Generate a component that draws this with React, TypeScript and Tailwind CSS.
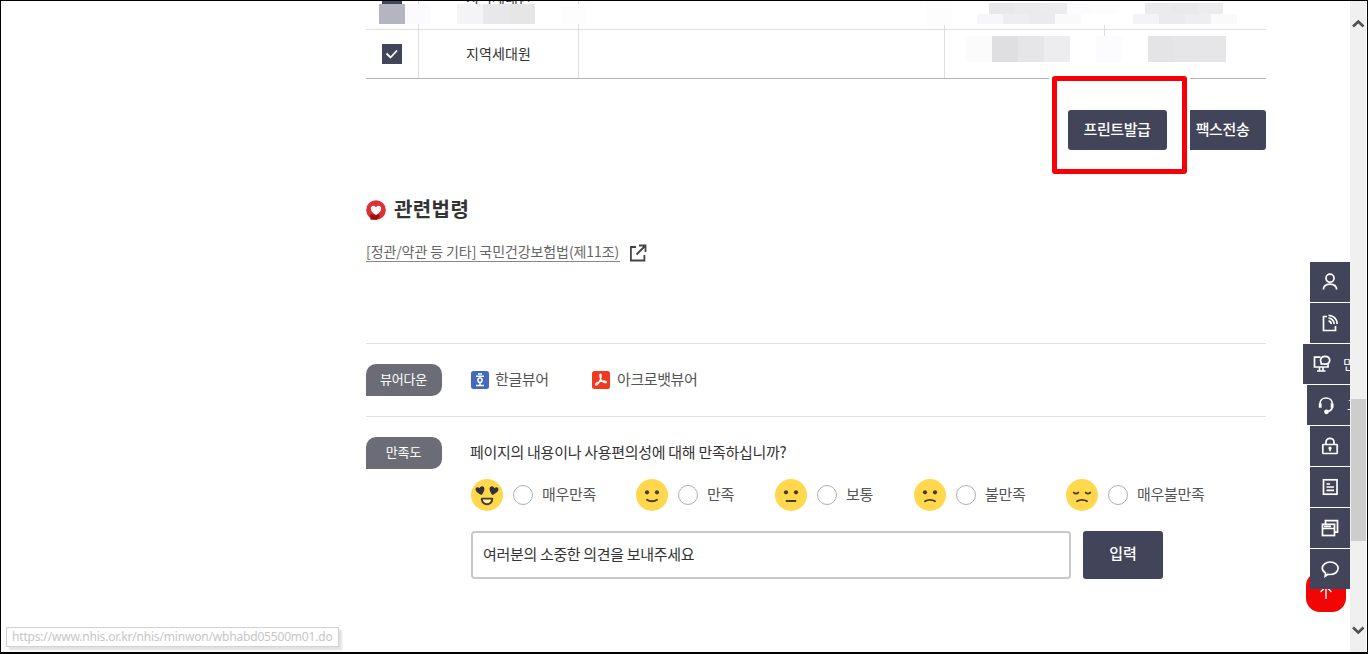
import React, { useState } from 'react';

const FONT = "font-['Noto_Sans_CJK_KR','Noto_Sans',sans-serif]";

type Mood = 'love' | 'good' | 'normal' | 'bad' | 'awful';

const RATINGS: { mood: Mood; label: string; width: string }[] = [
  { mood: 'love', label: '매우만족', width: 'w-[165px]' },
  { mood: 'good', label: '만족', width: 'w-[139px]' },
  { mood: 'normal', label: '보통', width: 'w-[139px]' },
  { mood: 'bad', label: '불만족', width: 'w-[152px]' },
  { mood: 'awful', label: '매우불만족', width: 'w-[150px]' },
];

const Face: React.FC<{ mood: Mood }> = ({ mood }) => (
  <svg className="h-8 w-8 shrink-0" viewBox="0 0 32 32" fill="none" stroke="#4a3a22" strokeWidth={1.9} strokeLinecap="round">
    <circle cx="16" cy="16" r="16" fill="#ffd84d" stroke="none" />
    {mood === 'love' && (
      <>
        <g fill="#33303a" stroke="none">
          <path d="M10.8 16C7 14.6 4.2 12.2 4.6 9.8c.3-1.8 2.7-2.3 4-.6.5-2.1 3-2.6 4.2-1.2 1.6 2-.1 5-2 8z" />
          <path d="M21.2 16c3.8-1.4 6.6-3.8 6.2-6.2-.3-1.8-2.7-2.3-4-.6-.5-2.1-3-2.6-4.2-1.2-1.6 2 .1 5 2 8z" />
        </g>
        <path d="M10.8 19.6h10.4v.6a5.2 5 0 0 1-10.4 0z" stroke="#4a3a22" fill="#fff0b0" strokeLinejoin="round" />
      </>
    )}
    {(mood === 'good' || mood === 'normal' || mood === 'bad') && (
      <g fill="#4a3a22" stroke="none">
        <circle cx="11" cy="13.3" r="2.1" />
        <circle cx="21" cy="13.3" r="2.1" />
      </g>
    )}
    {mood === 'good' && <path d="M11 20.8c2.5 1.9 7.5 1.9 10 0" />}
    {mood === 'normal' && <path d="M11.5 22h9" />}
    {mood === 'bad' && <path d="M11 22.3c2.5-1.9 7.5-1.9 10 0" />}
    {mood === 'awful' && (
      <>
        <path d="M7.8 13.6c1.2 1.3 3.2 1.3 4.5 0M19.7 13.6c1.3 1.3 3.3 1.3 4.5 0" />
        <path d="M11 22.3c2.5-1.9 7.5-1.9 10 0" />
      </>
    )}
  </svg>
);

const QUICK_ICONS: { name: string; width: string; pad: string; extra?: string; icon: React.ReactNode }[] = [
  {
    name: 'user',
    width: 'w-10',
    pad: 'pl-[10px]',
    icon: (
      <>
        <circle cx="10" cy="6.2" r="4" />
        <path d="M3.3 17.5c.4-3.8 2.9-5.3 6.700-5.300s6.300 1.500 6.700 5.300" />
      </>
    ),
  },
  {
    name: 'mobile',
    width: 'w-10',
    pad: 'pl-[10px]',
    icon: (
      <>
        <path d="M7 3.500H3.500v14h12V13" />
        <path d="M8.500 2.300c4.500 0 8.700 3.500 8.700 8.700M8.500 5.200c3 0 5.700 2.400 5.700 5.800M8.500 8.200c1.500 0 2.700 1.200 2.700 2.800" />
      </>
    ),
  },
  {
    name: 'minwon',
    width: 'w-[47px]',
    pad: 'pl-[9px]',
    extra: '민원',
    icon: (
      <>
        <path d="M8.500 3.200H2.500v9.800h13.500v-3M7.500 13v3.500M11 13v3.500M5 17h8.500" />
        <path d="M9.300 10l-.3-2C7.400 5.500 9.500 2.300 12.700 2.300c3 0 5 1.700 5 3.900s-2 3.900-5 3.900c-1.200 0-2.400-.4-3.400-.1z" />
      </>
    ),
  },
  {
    name: 'support',
    width: 'w-[43px]',
    pad: 'pl-[9px]',
    extra: '고객',
    icon: (
      <>
        <path d="M4 12V8.800C4 5.300 6.500 3 10 3s6.300 2.300 6.300 5.800v2.400c0 3-2 4.800-5.300 5.300" />
        <path d="M4.200 8.500v4.300M16.100 8.500v4.300" strokeWidth={2.800} />
        <circle cx="10.500" cy="16.800" r="1.500" fill="white" />
      </>
    ),
  },
  {
    name: 'lock',
    width: 'w-10',
    pad: 'pl-[10px]',
    icon: (
      <>
        <rect x="2.800" y="8.500" width="14.400" height="9" rx="0.500" />
        <path d="M6 8.500V6c0-2 1.700-3.700 4-3.700S14 4 14 6v2.500M10 13v2.300" />
        <circle cx="10" cy="12.200" r="0.800" fill="white" />
      </>
    ),
  },
  {
    name: 'document',
    width: 'w-10',
    pad: 'pl-[10px]',
    icon: (
      <>
        <rect x="3.500" y="2.800" width="13.500" height="14.400" />
        <path d="M6.500 7h3.500M6.500 10h7.500M6.500 13.300h7.500" />
      </>
    ),
  },
  {
    name: 'windows',
    width: 'w-10',
    pad: 'pl-[10px]',
    icon: (
      <>
        <rect x="2.500" y="6.300" width="12" height="11.200" />
        <path d="M2.500 10.500h12M5.500 6V2.700h12v11.500h-3M4 8.400h7" />
      </>
    ),
  },
  {
    name: 'chat',
    width: 'w-10',
    pad: 'pl-[10px]',
    icon: <path d="M5.200 17.200l.3-3.200C3.300 12.600 2.300 11 2.300 9.300c0-3.500 3.400-6.300 7.900-6.300s7.900 2.800 7.900 6.300-3.400 6.200-7.900 6.200c-.8 0-1.600-.1-2.300-.3z" />,
  },
];

const CheckBox: React.FC = () => (
  <span className="flex h-5 w-5 items-center justify-center bg-[#42455a]">
    <svg className="h-5 w-5" viewBox="0 0 20 20" fill="none" stroke="white" strokeWidth={1.800}>
      <path d="M4.500 9.500l4 4 6.500-7" />
    </svg>
  </span>
);

// Blurred blocks that hide personal data in the table
const Mosaic: React.FC<{ place: string; colors: string[] }> = ({ place, colors }) => (
  <div className={`absolute flex ${place}`}>
    {colors.map((color, i) => (
      <span key={i} className={`h-full w-[26px] ${color}`} />
    ))}
  </div>
);

const MemberTable: React.FC = () => (
  <div className="relative h-[78px] overflow-hidden border-b border-[#b4b4b4] text-sm text-[#333]">
    {/* Upper row, scrolled almost out of view */}
    <div className="grid h-[29px] grid-cols-[52px_161px_366px_160px_161px] overflow-hidden border-b border-[#dedede]">
      <div className="flex items-start justify-center"><span className="-mt-[17px]"><CheckBox /></span></div>
      <div className="flex h-[29px] items-start justify-center border-r border-l border-[#dedede] leading-5">
        <span className="-mt-[14px] tracking-[0.1px]">지역세대원</span>
      </div>
      <div className="border-r border-[#dedede]" />
      <div className="border-r border-[#dedede]" />
    </div>
    <div className="grid h-12 grid-cols-[52px_161px_366px_160px_161px]">
      <div className="flex items-center justify-center"><CheckBox /></div>
      <div className="flex items-center justify-center border-r border-l border-[#dedede] pb-[3px] tracking-[0.1px]">지역세대원</div>
      <div className="border-r border-[#dedede]" />
      <div className="flex justify-end"><span className="h-1.5 w-px bg-[#dedede]" /></div>
    </div>
    <Mosaic place="left-[13px] top-[3px] h-5" colors={['bg-[#b5b5c1]', 'bg-[#fbfbfd]', 'bg-white']} />
    <Mosaic place="left-[91px] top-[3px] h-5" colors={['bg-[#f4f4f6]', 'bg-[#e8e8ea]', 'bg-[#e6e6e7]', 'bg-white', 'bg-[#fdfdfe]']} />
    <Mosaic place="left-[560px] top-0 h-6" colors={['bg-[#fdfdfe]', 'bg-white', 'bg-white', 'bg-white', 'bg-white', 'bg-white', 'bg-white', 'bg-white', 'bg-white', 'bg-white', 'bg-white', 'bg-white', 'bg-white']} />
    <Mosaic place="left-[623px] top-0.5 h-[11px]" colors={['bg-[#e8e8eb]', 'bg-[#ebebed]', 'bg-[#ececee]', 'bg-[#fcfcfe]', 'bg-[#fdfdfe]', 'bg-white', 'bg-[#ebebed]', 'bg-[#e9e9eb]', 'bg-[#ececee]']} />
    <Mosaic place="left-[611px] top-[13px] h-[10px]" colors={['bg-[#f7f7f9]', 'bg-[#eeeef0]', 'bg-[#ebebed]', 'bg-[#fafafb]', 'bg-white', 'bg-white', 'bg-[#f4f4f6]', 'bg-[#ebebed]', 'bg-[#eeeef0]', 'bg-[#fafafb]']} />
    <Mosaic place="left-[600px] top-[35px] h-[26px]" colors={['bg-[#fbfbfc]', 'bg-[#dfdfe1]', 'bg-[#e6e6e8]', 'bg-[#ededef]', 'bg-white', 'bg-[#fcfcfe]', 'bg-white', 'bg-[#e4e4e6]', 'bg-[#e6e6e8]', 'bg-[#e6e6e8]']} />
  </div>
);

const SectionLabel: React.FC<{ text: string }> = ({ text }) => (
  <div className="flex h-8 w-[76px] shrink-0 items-center justify-center rounded-tl-[10px] rounded-tr-[10px] rounded-br-[10px] bg-[#6b6c76] pr-px pb-0.5 text-[13px] tracking-[-0.2px] text-white">
    {text}
  </div>
);

const QuickMenu: React.FC = () => (
  <div className="absolute top-[261px] right-0 flex flex-col items-end gap-px">
    {QUICK_ICONS.map(item => (
      <button key={item.name} className={`flex h-10 items-center overflow-hidden bg-[#42455a] text-[13px] text-white ${item.width} ${item.pad}`}>
        <svg className="h-5 w-5 shrink-0" viewBox="0 0 20 20" fill="none" stroke="white" strokeWidth={1.700}>
          {item.icon}
        </svg>
        {item.extra && <span className="ml-[11px] shrink-0">{item.extra}</span>}
      </button>
    ))}
  </div>
);

const Scrollbar: React.FC = () => (
  <div className="flex w-4 shrink-0 flex-col items-center bg-[#f0f0f0]">
    <svg className="mt-[15px] h-4 w-4 shrink-0" viewBox="0 0 16 16" fill="none" stroke="#505050" strokeWidth={2.600}>
      <path d="M3 10.500l5.300-5 5.200 5" />
    </svg>
    <div className="mt-[367px] h-[142px] w-[15px] shrink-0 bg-[#cdcdcd]" />
    <svg className="mt-[81px] h-4 w-4 shrink-0" viewBox="0 0 16 16" fill="none" stroke="#505050" strokeWidth={2.600}>
      <path d="M3 5.500l5.300 5 5.200-5" />
    </svg>
  </div>
);

export default function App() {
  const [rating, setRating] = useState<Mood | null>(null);
  const [opinion, setOpinion] = useState('여러분의 소중한 의견을 보내주세요');

  return (
    <div className={`flex h-[654px] w-[1368px] overflow-hidden border border-b-2 border-black bg-white ${FONT}`}>
      <div className="relative h-full w-[1349px] shrink-0">
        <main className="ml-[365px] w-[900px]">
          <MemberTable />

          <div className="mt-[31px] flex justify-end gap-[17px] text-[15px] font-medium tracking-[-0.4px] text-white">
            <button className="h-10 w-[99px] rounded-[3px] bg-[#42455a] pr-[7px] pb-0.5 pl-1.5">프린트발급</button>
            <button className="h-10 w-[82px] rounded-[3px] bg-[#42455a] pr-[5px] pb-0.5">팩스전송</button>
          </div>

          <h2 className="mt-11 flex h-8 items-center text-xl font-bold tracking-[0.4px] text-[#333]">
            <svg className="mr-2 h-5 w-5" viewBox="0 0 20 20">
              <circle cx="10" cy="10" r="9.800" fill="#dc3034" />
              <path d="M4 14.500h9.500v2l-2.500 3.300H4.500z" fill="#9b1016" />
              <path d="M10 15C6.500 12.800 4.800 10.900 4.800 8.500c0-3.300 3.700-3.700 5.200-1.200 1.500-2.500 5.200-2.100 5.200 1.200 0 2.400-1.700 4.300-5.200 6.500z" fill="white" />
            </svg>
            <span className="-mt-[3px]">관련법령</span>
          </h2>

          <div className="mt-4 flex h-5 items-center">
            <a className="h-5 w-[254px] border-b border-[#888] text-sm leading-[18px] tracking-[-0.09px] whitespace-nowrap text-[#666]">
              [정관/약관 등 기타] 국민건강보험법(제11조)
            </a>
            <svg className="mt-px ml-[9px] h-[18px] w-[18px]" viewBox="0 0 18 18" fill="none" stroke="#444" strokeWidth={1.800}>
              <path d="M7 3H1.900v13.500h13.500V11M10 1.500h6.500V8M16 2L7.500 10.500" />
            </svg>
          </div>

          <div className="mt-[81px] flex h-[74px] border-y border-[#e2e2e2] pt-5 text-[15px] tracking-[-0.4px] text-[#555]">
            <SectionLabel text="뷰어다운" />
            <a className="ml-[29px] flex h-8 w-[121px] items-center">
              <svg className="mr-1.5 h-[18px] w-[18px]" viewBox="0 0 18 18" fill="none" stroke="white" strokeWidth={1.500}>
                <rect width="18" height="18" rx="2.500" fill="#4269bd" stroke="none" />
                <path d="M7 3h4M5 5.300h8M9 11.500v2.500M5 14.500h8" />
                <circle cx="9" cy="9.200" r="2.100" />
              </svg>
              <span className="-mt-0.5">한글뷰어</span>
            </a>
            <a className="flex h-8 items-center">
              <svg className="mr-[7px] h-[18px] w-[18px]" viewBox="0 0 18 18" fill="none" stroke="white" strokeWidth={1.300}>
                <rect width="18" height="18" rx="2.500" fill="#f03a20" stroke="none" />
                <path d="M8.300 3.200c1.300 0 1 3-.2 6-1.100 2.700-3.200 5.500-4.300 4.800-1.100-.9 1.700-3 4.700-3.600 3-.7 6-.5 5.900.7-.1 1.300-3.300.4-4.800-1.500C8 7.500 7.200 3.400 8.300 3.200z" />
              </svg>
              <span className="-mt-0.5">아크로뱃뷰어</span>
            </a>
          </div>

          <div className="flex pt-5">
            <SectionLabel text="만족도" />
            <div className="ml-[29px]">
              <p className="-ml-px h-[30px] text-[15px] leading-[29px] tracking-[-0.29px] whitespace-nowrap text-[#333]">
                페이지의 내용이나 사용편의성에 대해 만족하십니까?
              </p>
              <div className="mt-3 flex text-[15px] tracking-[-0.3px] text-[#555]">
                {RATINGS.map(({ mood, label, width }) => (
                  <label key={mood} className={`flex h-8 items-center whitespace-nowrap ${width}`}>
                    <Face mood={mood} />
                    <input
                      type="radio"
                      name="rating"
                      checked={rating === mood}
                      onChange={() => setRating(mood)}
                      className="mr-[9px] ml-2.5 h-5 w-5 shrink-0 appearance-none rounded-full border border-[#b0b0b0] bg-white checked:border-[6px] checked:border-[#42455a]"
                    />
                    <span className="-mt-0.5">{label}</span>
                  </label>
                ))}
              </div>
              <div className="mt-5 flex h-12">
                <input
                  value={opinion}
                  onChange={e => setOpinion(e.target.value)}
                  className="h-12 w-[600px] rounded border-2 border-[#c8c8c8] px-2.5 pb-1 text-[15px] tracking-[-0.33px] text-[#333] outline-none"
                />
                <button className="ml-3 h-12 w-20 rounded-[3px] bg-[#42455a] pb-[3px] text-[15px] font-medium text-white">입력</button>
              </div>
            </div>
          </div>
        </main>

        {/* Highlight around the print button */}
        <div className="absolute top-[75px] left-[1048px] h-[98px] w-[141px] border-x-[3px] border-white">
          <div className="h-full w-[135px] rounded-[3px] border-[5px] border-[#f80008]" />
        </div>

        {/* Back to top */}
        <button className="absolute top-[571px] left-[1305px] flex h-10 w-10 items-center justify-center rounded-[14px] bg-[#f20505]">
          <svg className="h-5 w-5" viewBox="0 0 20 20" fill="none" stroke="white" strokeWidth={1.400}>
            <path d="M10 17V5M4.500 10L10 4.500l5.500 5.500" />
          </svg>
        </button>
        <QuickMenu />

        {/* Browser status tooltip */}
        <div className="absolute top-[626px] left-[5px] h-5 w-[333px] border border-[#d2d2d2] bg-white pl-[5px] font-['Noto_Sans',sans-serif] text-xs leading-[18px] tracking-[-0.18px] whitespace-nowrap text-[#c6c6c6] shadow-[3px_3px_2px_#e2e2e2]">
          https://www.nhis.or.kr/nhis/minwon/wbhabd05500m01.do
        </div>
      </div>
      <Scrollbar />
    </div>
  );
}
